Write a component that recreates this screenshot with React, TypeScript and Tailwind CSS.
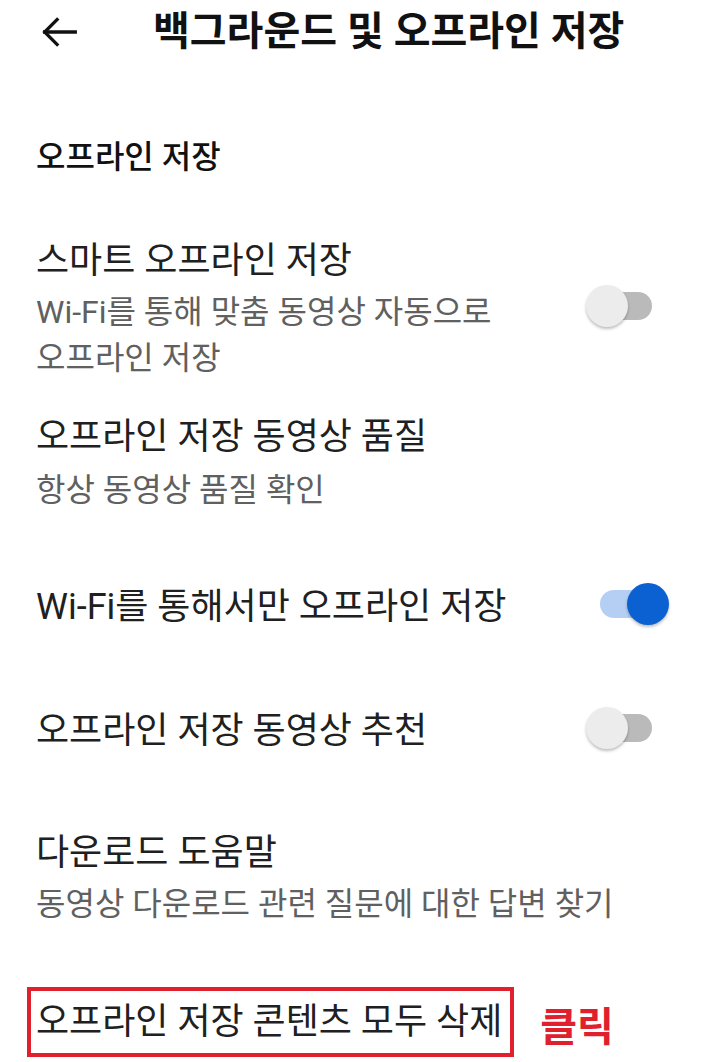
import { useState } from "react";

function Toggle({ on, onClick }: { on: boolean; onClick: () => void }) {
  return (
    <button
      type="button"
      onClick={onClick}
      className="relative w-[86px] h-[44px] shrink-0"
      aria-pressed={on}
    >
      <span
        className={`absolute top-[8px] right-[2px] w-[52px] h-[28px] rounded-full ${
          on ? "bg-[#b4cff3]" : "bg-[#bababa]"
        }`}
      />
      <span
        className={`absolute top-[1px] w-[42px] h-[42px] rounded-full shadow-[0_2px_3px_rgba(0,0,0,0.25)] ${
          on ? "right-[-15px] bg-[#0b60d2]" : "left-[18px] bg-[#ececec]"
        }`}
      />
    </button>
  );
}

export default function App() {
  const [smart, setSmart] = useState(false);
  const [wifiOnly, setWifiOnly] = useState(true);
  const [recommend, setRecommend] = useState(false);

  return (
    <div
      className="w-[720px] h-[1062px] bg-white overflow-hidden text-[#202020] break-keep"
      style={{ fontFamily: '"Roboto", "Noto Sans CJK KR", sans-serif' }}
    >
      {/* header */}
      <div className="h-[64px] flex items-center">
        <button type="button" className="ml-[36px] w-[46px] h-[46px] flex items-center justify-center">
          <svg width="46" height="46" viewBox="0 0 24 24" fill="none" stroke="#111" strokeWidth="1.7" strokeLinecap="square">
            <path d="M20.5 12H4.5" />
            <path d="M11 5.5L4.5 12L11 18.5" />
          </svg>
        </button>
        <h1 className="ml-[71px] text-[40px] leading-[46px] font-bold text-[#111] whitespace-nowrap">
          백그라운드 및 오프라인 저장
        </h1>
      </div>

      <div className="px-[36px]">
        <div className="mt-[73px] text-[32px] leading-[40px] font-medium text-[#111]">오프라인 저장</div>

        {/* smart */}
        <div className="mt-[61px] flex items-start justify-between">
          <div>
            <div className="text-[36px] leading-[46px]">스마트 오프라인 저장</div>
            <div className="mt-[5px] text-[32px] leading-[46px] text-[#606060] w-[500px]">
              Wi-Fi를 통해 맞춤 동영상 자동으로 오프라인 저장
            </div>
          </div>
          <div className="mt-[46px] mr-[30px]">
            <Toggle on={smart} onClick={() => setSmart(!smart)} />
          </div>
        </div>

        {/* quality */}
        <div className="mt-[33px]">
          <div className="text-[36px] leading-[46px]">오프라인 저장 동영상 품질</div>
          <div className="mt-[7px] text-[32px] leading-[46px] text-[#606060]">항상 동영상 품질 확인</div>
        </div>

        {/* wifi only */}
        <div className="mt-[71px] flex items-center justify-between h-[46px]">
          <div className="text-[36px] leading-[46px]">Wi-Fi를 통해서만 오프라인 저장</div>
          <div className="mr-[30px]">
            <Toggle on={wifiOnly} onClick={() => setWifiOnly(!wifiOnly)} />
          </div>
        </div>

        {/* recommend */}
        <div className="mt-[78px] flex items-center justify-between h-[46px]">
          <div className="text-[36px] leading-[46px]">오프라인 저장 동영상 추천</div>
          <div className="mr-[30px]">
            <Toggle on={recommend} onClick={() => setRecommend(!recommend)} />
          </div>
        </div>

        {/* help */}
        <div className="mt-[76px]">
          <div className="text-[36px] leading-[46px]">다운로드 도움말</div>
          <div className="mt-[5px] text-[32px] leading-[46px] text-[#606060]">
            동영상 다운로드 관련 질문에 대한 답변 찾기
          </div>
        </div>
      </div>

      {/* delete all */}
      <div className="mt-[60px] ml-[27px] flex items-center">
        <div className="border-[4px] border-[#e0202c] pl-[5px] pr-[8px] py-[8px] text-[36px] leading-[46px] whitespace-nowrap">
          오프라인 저장 콘텐츠 모두 삭제
        </div>
        <span className="ml-[26px] mt-[12px] text-[40px] leading-[40px] font-bold text-[#e0202c]">클릭</span>
      </div>
    </div>
  );
}
